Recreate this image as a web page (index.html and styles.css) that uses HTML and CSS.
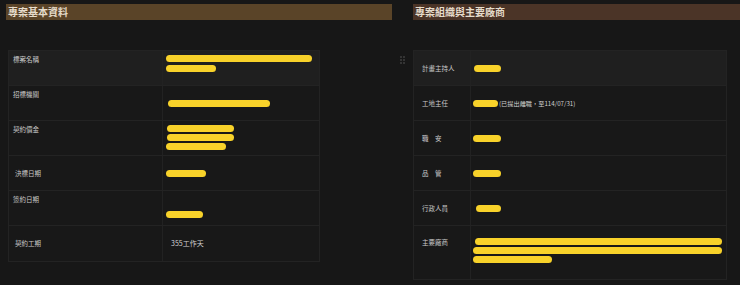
FILE: index.html
```html
<!DOCTYPE html>
<html lang="zh-Hant">
<head>
<meta charset="utf-8">
<title>專案資料</title>
<link rel="stylesheet" href="styles.css">
</head>
<body>
<div class="page">
  <section class="panel panel-left">
    <h2 class="panel-title title-left">專案基本資料</h2>
    <div class="table table-left">
      <div class="row row-hi">
        <div class="cell label top">標案名稱</div>
        <div class="cell value top">
          <span class="mark w146"></span>
          <span class="mark w50"></span>
        </div>
      </div>
      <div class="row">
        <div class="cell label top">招標機關</div>
        <div class="cell value center">
          <span class="mark w102 ml2"></span>
        </div>
      </div>
      <div class="row">
        <div class="cell label top">契約價金</div>
        <div class="cell value top tight">
          <span class="mark w67 ml1"></span>
          <span class="mark w67 ml1"></span>
          <span class="mark w60"></span>
        </div>
      </div>
      <div class="row">
        <div class="cell label center pl2">決標日期</div>
        <div class="cell value center">
          <span class="mark w40"></span>
        </div>
      </div>
      <div class="row">
        <div class="cell label top">簽約日期</div>
        <div class="cell value center low">
          <span class="mark w37"></span>
        </div>
      </div>
      <div class="row">
        <div class="cell label center pl2">契約工期</div>
        <div class="cell value center text">355工作天</div>
      </div>
    </div>
  </section>

  <section class="panel panel-right">
    <h2 class="panel-title title-right">專案組織與主要廠商</h2>
    <div class="table-wrap">
      <svg class="handle" width="6" height="8" viewBox="0 0 6 8">
        <circle cx="1" cy="1" r="0.7"/><circle cx="4" cy="1" r="0.7"/>
        <circle cx="1" cy="4" r="0.7"/><circle cx="4" cy="4" r="0.7"/>
        <circle cx="1" cy="7" r="0.7"/><circle cx="4" cy="7" r="0.7"/>
      </svg>
      <div class="table table-right">
        <div class="row row-hi">
          <div class="cell label center">計畫主持人</div>
          <div class="cell value center"><span class="mark w27 ml1"></span></div>
        </div>
        <div class="row">
          <div class="cell label center">工地主任</div>
          <div class="cell value center">
            <div class="inline"><span class="mark w25"></span><span class="note">(已提出離職，至114/07/31)</span></div>
          </div>
        </div>
        <div class="row">
          <div class="cell label center">職　安</div>
          <div class="cell value center"><span class="mark w28"></span></div>
        </div>
        <div class="row">
          <div class="cell label center">品　管</div>
          <div class="cell value center"><span class="mark w28"></span></div>
        </div>
        <div class="row">
          <div class="cell label center">行政人員</div>
          <div class="cell value center"><span class="mark w25 ml3"></span></div>
        </div>
        <div class="row row-tall">
          <div class="cell label top tall-pad">主要廠商</div>
          <div class="cell value top tall-pad tight">
            <span class="mark w247 ml2"></span>
            <span class="mark w249"></span>
            <span class="mark w79"></span>
          </div>
        </div>
      </div>
    </div>
  </section>
</div>
</body>
</html>
```

FILE: styles.css
```css
* { box-sizing: border-box; }

html, body {
  margin: 0;
  padding: 0;
  background: #171717;
  width: 740px;
  height: 285px;
  overflow: hidden;
  font-family: "Noto Sans CJK TC", "Noto Sans", sans-serif;
  color: #c9c9c9;
}

.page {
  display: flex;
  padding-top: 4px;
}

.panel-left {
  width: 392px;
  padding-left: 6px;
}

.panel-right {
  flex: 1;
  padding-left: 21px;
}

.panel-title {
  margin: 0;
  height: 16px;
  line-height: 16px;
  font-size: 10px;
  font-weight: 700;
  color: #e6dccb;
  padding-left: 2px;
}

.title-left { background: #5a4428; }
.title-right { background: #4b3427; }

.table {
  margin-top: 30px;
  border: 1px solid #232323;
  background: #181818;
}

.table-left {
  width: 312px;
  margin-left: 2px;
}

.table-wrap {
  display: flex;
  position: relative;
}

.handle {
  position: absolute;
  left: -13px;
  top: 36px;
  fill: #6a6a6a;
}

.table-right {
  width: 314px;
}

.row {
  display: grid;
  height: 35px;
  border-bottom: 1px solid #232323;
}

.row:last-child { border-bottom: none; }

.table-left .row { grid-template-columns: 154px 1fr; }
.table-right .row { grid-template-columns: 57px 1fr; }

.row-hi { background: #1f1f1f; }
.row-tall { height: 53px; }

.cell {
  display: flex;
  flex-direction: column;
  font-size: 6.5px;
  line-height: 9px;
  min-width: 0;
}

.label {
  padding-left: 4px;
  border-right: 1px solid #222222;
}

.table-right .label { padding-left: 8px; }

.top { justify-content: flex-start; padding-top: 4px; }
.center { justify-content: center; }
.low { padding-top: 12px; }
.tall-pad { padding-top: 12px; }
.pl2 { padding-left: 6px; }

.value {
  padding-left: 3px;
  gap: 3px;
}

.table-right .value { padding-left: 2px; }

.tight { gap: 2px; }

.text {
  padding-left: 8px;
  color: #d0d0d0;
  font-size: 7px;
}

.mark {
  display: block;
  height: 7px;
  border-radius: 4px;
  background: #f8d22a;
}

.inline {
  display: flex;
  align-items: center;
}

.note {
  font-size: 6.2px;
  color: #d0d0d0;
  margin-left: 1px;
}

.ml1 { margin-left: 1px; }
.ml2 { margin-left: 2px; }
.ml3 { margin-left: 3px; }

.w25 { width: 25px; }
.w27 { width: 27px; }
.w28 { width: 28px; }
.w37 { width: 37px; }
.w40 { width: 40px; }
.w50 { width: 50px; }
.w60 { width: 60px; }
.w67 { width: 67px; }
.w79 { width: 79px; }
.w102 { width: 102px; }
.w146 { width: 146px; }
.w247 { width: 247px; }
.w249 { width: 249px; }
```
